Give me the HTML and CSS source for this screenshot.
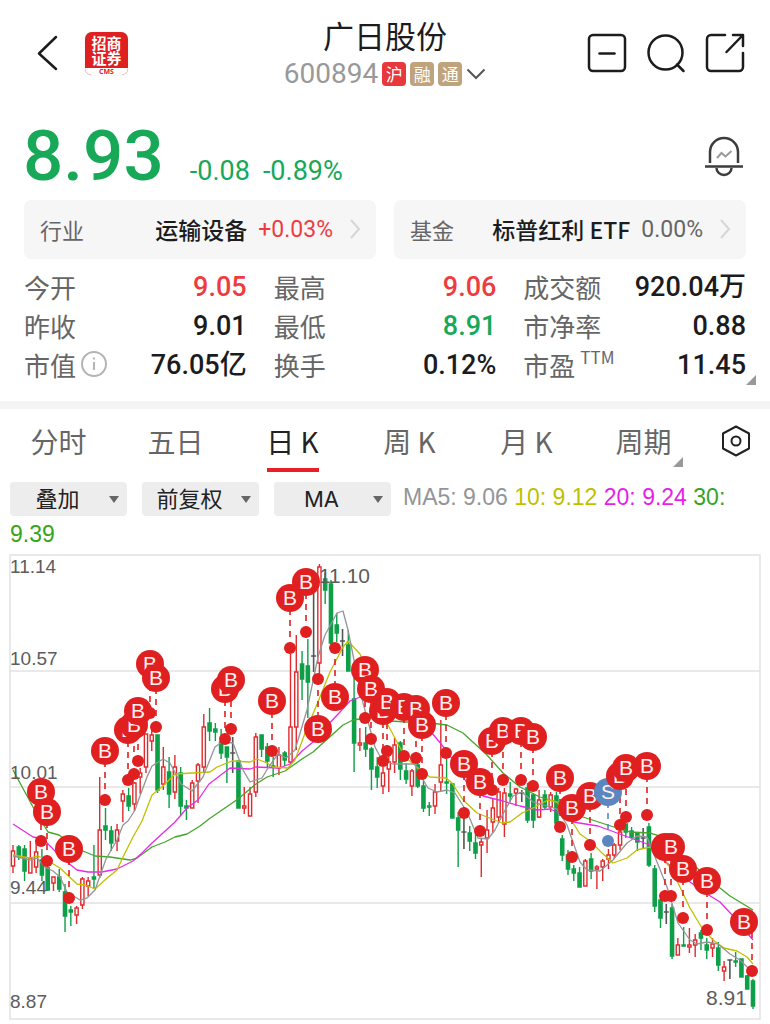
FILE: index.html
```html
<!DOCTYPE html>
<html lang="zh-CN">
<head>
<meta charset="utf-8">
<meta name="viewport" content="width=device-width, initial-scale=1">
<title>广日股份 600894</title>
<link rel="stylesheet" href="styles.css">
</head>
<body>
<header class="topbar">
  <div class="topbar-left">
    <button class="icon-btn" aria-label="返回"><svg width="24" height="38" viewBox="0 0 24 38"><path d="M20 3 3 19.500 20 35" class="ink"/></svg></button>
    <div class="logo"><div class="logo-name">招商<br>证券</div><div class="logo-code">CMS</div></div>
  </div>
  <div class="heading">
    <h1 class="stock-name">广日股份</h1>
    <button class="stock-code"><span class="code">600894</span><span class="tag tag-red">沪</span><span class="tag">融</span><span class="tag">通</span><svg width="20" height="12" viewBox="0 0 20 12"><path d="M1.500 1.500 10 10 18.500 1.500" class="chev-down"/></svg></button>
  </div>
  <div class="topbar-right">
    <button class="icon-btn" aria-label="移除自选"><svg width="40" height="40" viewBox="0 0 40 40"><rect x="2" y="2" width="36" height="36" rx="4" class="ink"/><path d="M12.500 20.500h15" class="ink"/></svg></button>
    <button class="icon-btn" aria-label="搜索"><svg width="40" height="40" viewBox="0 0 40 40"><circle cx="19.500" cy="19.500" r="17" class="ink"/><path d="m31 31.500 6.500 6.500" class="ink"/></svg></button>
    <button class="icon-btn" aria-label="分享"><svg width="40" height="40" viewBox="0 0 40 40"><path d="M20 2H6a4 4 0 0 0-4 4v28a4 4 0 0 0 4 4h28a4 4 0 0 0 4-4V20M38 13V2H28M37 3 21.500 19" class="ink"/></svg></button>
  </div>
</header>

<section class="quote">
  <div class="price">8.93</div>
  <div class="change"><span>-0.08</span><span>-0.89%</span></div>
  <button class="icon-btn bell" aria-label="股价提醒"><svg width="42" height="42" viewBox="0 0 42 42"><path d="M7 28V17a14 14 0 0 1 28 0v11M2 31.500h38M13.500 33a7.500 7 0 0 0 15 0" class="bell-line"/><path d="m14 23 4.500-5 4 3.500 6-5.500" class="bell-wave"/></svg></button>
</section>

<section class="links">
  <a class="link-card" href="#"><span class="link-label">行业</span><span class="link-name">运输设备</span><span class="link-pct up">+0.03%</span><svg width="12" height="20" viewBox="0 0 12 20"><path d="m2 1 8 9-8 9" class="chev"/></svg></a>
  <a class="link-card" href="#"><span class="link-label">基金</span><span class="link-name">标普红利 ETF</span><span class="link-pct">0.00%</span><svg width="12" height="20" viewBox="0 0 12 20"><path d="m2 1 8 9-8 9" class="chev"/></svg></a>
</section>

<dl class="stats">
  <div class="stat"><dt>今开</dt><dd class="up">9.05</dd></div>
  <div class="stat"><dt>最高</dt><dd class="up">9.06</dd></div>
  <div class="stat"><dt>成交额</dt><dd>920.04万</dd></div>
  <div class="stat"><dt>昨收</dt><dd>9.01</dd></div>
  <div class="stat"><dt>最低</dt><dd class="down">8.91</dd></div>
  <div class="stat"><dt>市净率</dt><dd>0.88</dd></div>
  <div class="stat"><dt>市值<svg width="26" height="26" viewBox="0 0 26 26"><circle cx="13" cy="13" r="12" class="info"/><path d="M13 11v8M13 6.500v2" class="info"/></svg></dt><dd>76.05亿</dd></div>
  <div class="stat"><dt>换手</dt><dd>0.12%</dd></div>
  <div class="stat"><dt>市盈<sup>TTM</sup></dt><dd>11.45</dd></div>
  <i class="corner stats-corner"></i>
</dl>

<nav class="tabs">
  <button class="tab">分时</button>
  <button class="tab">五日</button>
  <button class="tab active">日 K</button>
  <button class="tab">周 K</button>
  <button class="tab">月 K</button>
  <button class="tab">周期<i class="corner tab-corner"></i></button>
  <button class="tab-settings" aria-label="设置"><svg width="32" height="32" viewBox="0 0 32 32"><path d="M16 1.500 29 8.500v15L16 30.500 3 23.500v-15z" class="hex"/><circle cx="16" cy="16" r="4.500" class="hex"/></svg></button>
</nav>

<div class="indicators">
  <span class="pick"><select aria-label="叠加"><option>叠加</option></select></span><span class="pick"><select aria-label="复权"><option>前复权</option></select></span><span class="pick"><select aria-label="指标"><option>MA</option></select></span><span class="ma ma5">MA5: 9.06</span> <span class="ma ma10">10: 9.12</span> <span class="ma ma20">20: 9.24</span> <span class="ma30">30: 9.39</span>
</div>

<svg class="chart" id="chart" viewBox="0 554 770 470" role="img" aria-label="日K线图"></svg>
<script src="chart.js"></script>
</body>
</html>
```

FILE: styles.css
```css
* { box-sizing: border-box; }
body {
  margin: 0;
  background: #fff;
  color: #1c1c1e;
  font-family: "Noto Sans CJK SC", sans-serif;
  overflow-x: hidden;
}
button {
  border: 0;
  padding: 0;
  margin: 0;
  background: none;
  color: inherit;
  font: inherit;
  cursor: pointer;
}
svg { display: block; fill: none; }
.up { color: #ef3b40; }
.down { color: #17a858; }

.ink { stroke: #1c1c1e; stroke-width: 2.5; stroke-linecap: round; stroke-linejoin: round; }
.chev-down { stroke: #555; stroke-width: 2; }
.chev { stroke: #d6d6d6; stroke-width: 2; }
.bell-line { stroke: #3c3c3e; stroke-width: 2.5; }
.bell-wave { stroke: #999; stroke-width: 2; }
.info { stroke: #b4b4b4; stroke-width: 2; }
.hex { stroke: #222; stroke-width: 2; stroke-linejoin: round; }

.topbar {
  display: grid;
  grid-template-columns: 1fr auto 1fr;
  align-items: center;
  padding: 16px 25px 0 36px;
}
.topbar-left { display: flex; align-items: center; gap: 25px; }
.topbar-right { display: flex; justify-content: flex-end; gap: 19px; }
.logo {
  width: 43px;
  border-radius: 7px;
  overflow: hidden;
  background: #de2020;
  box-shadow: 0 0 1px #aaa;
  text-align: center;
  font-weight: 700;
}
.logo-name { padding: 3px 0 3px; color: #fff; font-size: 15px; line-height: 15px; }
.logo-code { background: #fff; color: #de2020; font-family: "Open Sans", sans-serif; font-size: 7px; line-height: 7px; }
.heading { display: flex; flex-direction: column; align-items: center; margin-left: -11px; }
.stock-name { margin: 0; font-size: 31px; line-height: 38px; font-weight: 400; }
.stock-code { display: flex; align-items: center; gap: 4px; padding-top: 4px; line-height: 32px; }
.code { color: #999; font: 400 28px/32px Roboto, sans-serif; }
.tag {
  width: 24px;
  border-radius: 4px;
  background: #bfa37c;
  color: #fff;
  font-size: 17px;
  line-height: 24px;
  text-align: center;
}
.tag-red { background: #e8373d; }

.quote { display: flex; align-items: flex-end; padding: 22px 25px 0 23px; }
.price { color: #17a858; font: 500 71px/88px Roboto, sans-serif; }
.change { display: flex; gap: 13px; margin-left: 26px; color: #17a858; font: 400 27px/32px Roboto, sans-serif; padding-bottom: 13px; }
.bell { margin: 0 0 23px auto; }

.links { display: grid; grid-template-columns: 1fr 1fr; gap: 18px; padding: 0 24px; }
.link-card {
  display: flex;
  align-items: center;
  height: 59px;
  padding: 0 15px 2px 16px;
  border-radius: 7px;
  background: #f6f6f6;
  color: #666;
  text-decoration: none;
}
.link-label { margin-right: auto; font-size: 22px; }
.link-name { color: #1c1c1e; font-size: 23px; font-weight: 500; }
.link-pct { margin: 2px 16px 0 11px; font: 400 23px/32px Roboto, sans-serif; }
.link-pct.up { color: #ef3b40; }

.stats {
  position: relative;
  display: grid;
  grid-template-columns: repeat(3, 1fr);
  column-gap: 27px;
  margin: 0;
  padding: 9px 24px 16px;
  border-bottom: 8px solid #f4f4f4;
}
.stat { display: flex; justify-content: space-between; align-items: center; line-height: 39px; }
.stat dt { display: flex; align-items: center; gap: 5px; height: 39px; padding-bottom: 3px; color: #666; font-size: 26px; }
.stat sup { align-self: flex-start; font-size: 17px; line-height: 22px; }
.stat dd { margin: 0; font-family: Roboto, "Noto Sans CJK SC", sans-serif; font-size: 27px; font-weight: 500; }
.corner { position: absolute; border-style: solid; border-width: 0 0 10px 10px; border-color: transparent transparent #999; }
.stats-corner { right: 14px; bottom: 16px; }

.tabs { display: flex; }
.tab {
  position: relative;
  flex: 1;
  height: 63px;
  color: #666;
  font-size: 28px;
}
.tab.active { color: #222; }
.tab.active::after {
  content: "";
  position: absolute;
  left: 50%;
  bottom: 0;
  width: 52px;
  height: 4px;
  margin-left: -26px;
  background: #ea1f25;
}
.tab-corner { right: 19px; bottom: 5px; }
.tab-settings { display: grid; place-items: center; width: 68px; }

.indicators { padding: 7px 10px 2px; font: 400 23px/36px "Liberation Sans", "Noto Sans CJK SC", sans-serif; }
.pick { position: relative; display: inline-block; width: 117px; margin-right: 15px; vertical-align: middle; }
.pick:nth-child(3) { margin-right: 12px; }
.pick select {
  appearance: none;
  display: block;
  width: 100%;
  height: 34px;
  padding: 0 22px 0 0;
  border: 0;
  border-radius: 4px;
  background: #ededed;
  color: #222;
  font: 400 22px/34px Inter, "Noto Sans CJK SC", sans-serif;
  text-align: center;
  text-align-last: center;
}
.pick::after {
  content: "";
  position: absolute;
  right: 8px;
  top: 14px;
  border: 5px solid transparent;
  border-top: 7px solid #666;
  border-bottom: 0;
}
.ma { white-space: nowrap; }
.ma5 { color: #939598; }
.ma10 { color: #c0bf00; }
.ma20 { color: #e81ee8; }
.ma30 { color: #35a41f; }

.chart { width: 100%; font-family: "Liberation Sans", sans-serif; }
.grid { stroke: #e2e2e2; stroke-width: 1.5; }
.candle-r { stroke: #e02b2e; stroke-width: 1.4; }
.candle-g { stroke: #0e9f48; fill: #0e9f48; stroke-width: 1.4; }
.candle-k { stroke: #555; stroke-width: 1.6; }
.line { stroke-width: 1.3; stroke-linejoin: round; }
.line-5 { stroke: #939598; }
.line-10 { stroke: #c0bf00; }
.line-20 { stroke: #e52be8; }
.line-30 { stroke: #43a629; }
.axis { fill: #5c5c5c; font-size: 19px; }
.peak { fill: #5c5c5c; font-size: 21px; }
.stem { stroke-width: 1.6; stroke-dasharray: 6 5; }
.buy { fill: #e02020; stroke: none; }
.sell { fill: #5b86c0; stroke: none; }
.stem-buy { stroke: #e02020; }
.stem-sell { stroke: #5b86c0; }
.letter { fill: #fff0f0; font-size: 21px; text-anchor: middle; }
```

FILE: chart.js
```js
const svg = document.getElementById('chart');
const NS = 'http://www.w3.org/2000/svg';

function add(name, cls, attrs, text) {
  const el = document.createElementNS(NS, name);
  el.setAttribute('class', cls);
  for (const key in attrs) el.setAttribute(key, attrs[key]);
  if (text) el.textContent = text;
  svg.appendChild(el);
}

// Each candle: colour, high, body top, body bottom, low.
const candles = `r845,851,866,873 g845,847,856,860 g845,849,871,881 r841,858,873,873 r841,852,867,873
g849,860,875,881 g862,868,890,891 r877,877,883,891 g869,877,889,892 g884,892,916,932
g906,910,912,926 r906,908,915,924 r877,879,905,909 r877,881,886,896 g845,877,879,888
r777,830,875,878 g808,826,830,840 g826,831,843,851 r824,830,841,851 r790,794,801,822
g788,796,806,811 r782,783,804,811 r768,773,777,794 r734,734,767,773 r725,735,741,751
g735,735,790,793 r747,767,784,790 g757,772,794,808 r755,767,792,799 g767,773,806,816
g800,806,808,820 r780,783,808,808 r763,765,781,803 r714,727,767,773 g708,723,731,741
g723,729,732,741 g729,742,753,759 g747,747,757,783 k737,753,753,773 g761,761,808,808
r787,806,808,814 r787,794,816,816 r733,737,792,797 g735,735,749,757 g743,747,761,768
g757,766,767,777 r747,755,768,775 g751,753,760,766 r654,727,762,763 r635,672,727,750
g651,664,679,700 g639,666,682,718 k593,656,656,672 r564,567,663,674 g573,579,590,604
g580,584,643,645 g613,625,633,642 k629,641,641,656 g630,645,671,671 g663,699,743,772
r728,743,745,751 g727,743,749,757 g747,749,769,790 g757,767,777,788 r767,773,786,794
r755,762,769,792 r738,745,762,773 g741,743,769,780 g763,771,779,784 r769,771,786,796
g760,765,786,788 g780,786,808,812 g802,806,807,816 r784,792,806,814 r720,765,782,791
g759,782,783,794 g783,784,818,818 g812,818,830,867 k813,832,832,849 g826,833,841,851
g833,843,853,859 r838,842,845,877 r810,830,838,853 r799,808,822,833 r788,792,817,823
r788,793,824,837 g782,794,796,802 r788,789,793,806 k790,793,793,802 g783,788,820,823
g793,795,820,828 r790,800,817,818 g790,795,807,810 r792,795,807,812 g792,796,823,826
g835,839,855,861 g850,855,869,875 g865,869,873,881 g867,873,887,887 r859,861,886,886
g853,859,871,879 r865,867,869,889 r859,861,867,881 r849,855,859,869 r843,845,855,859
r830,832,845,850 g824,824,832,838 g827,831,837,838 g833,833,842,851 k828,838,838,848
g823,827,865,867 g865,869,906,912 g898,900,918,928 k904,912,912,924 g904,908,956,959
r938,945,955,955 g927,945,946,946 r928,945,947,953 r934,940,945,957 g930,933,938,950
g938,945,950,959 r938,944,948,957 g942,948,965,971 r961,967,971,981 k960,960,960,979
g952,961,962,967 g959,959,977,977 g975,976,989,989 g979,981,1006,1009`.split(/\s+/);

const averages = {
  30: '13,770 33,807 48,832 59,835 83,851 95,856 110,857 130,860 137,858 152,847 165,842 175,837 187,834 200,826 209,819 238,799 256,784 267,777 285,771 302,759 313,752 323,743 343,725 353,720 373,717 390,721 407,722 430,723 447,725 463,733 487,755 503,773 520,787 540,797 557,802 583,817 620,829 630,832 650,833 657,835 697,868 720,888 730,896 753,910',
  20: '13,824 33,837 43,839 62,858 77,870 88,872 102,872 117,869 133,861 142,853 152,843 175,822 187,808 198,800 209,784 230,768 250,769 256,767 279,768 290,764 302,751 313,742 325,728 340,712 350,701 360,697 390,700 415,715 432,733 446,750 453,760 467,783 483,796 503,801 520,806 537,810 550,809 562,814 573,822 598,826 617,833 650,845 667,863 690,882 707,894 720,902 733,916 753,940',
  10: '13,855 30,858 37,856 43,858 60,868 77,884 85,885 95,889 106,879 117,870 123,857 133,837 142,821 152,795 163,786 175,774 210,772 217,767 232,761 250,762 257,759 267,763 273,767 288,768 295,760 307,728 318,702 330,672 343,647 348,641 360,654 375,685 388,725 405,757 417,767 430,777 446,778 452,783 463,800 477,813 487,817 502,823 510,822 522,813 535,807 548,800 557,802 573,823 580,834 590,841 602,853 613,863 627,858 637,850 650,847 670,867 678,883 690,908 702,928 713,940 724,948 737,951 747,957 753,964',
  5: '13,856 30,860 37,858 45,867 53,871 60,877 67,892 80,900 87,898 95,890 106,859 117,840 123,825 128,821 135,810 140,796 147,777 152,766 163,759 170,763 181,784 192,791 203,777 215,747 222,742 233,743 243,770 250,782 262,778 268,768 278,754 286,758 295,750 307,710 318,657 325,635 337,613 343,611 348,630 354,660 363,703 375,747 382,760 393,764 415,764 422,778 428,788 437,792 447,790 455,793 467,812 478,838 488,839 495,830 503,814 513,796 522,792 533,802 557,809 567,825 580,862 587,870 600,871 613,860 627,843 637,836 647,837 657,862 667,887 678,923 690,940 697,944 707,942 718,944 730,954 740,960 753,973'
};

// Trade marks: badge x, badge y, dot x, dot y.
const trades = [
  [41, 792, 41, 841], [47, 812, 47, 861], [69, 849, 69, 898], [105, 751, 105, 800],
  [128, 730, 128, 780], [134, 725, 134, 774], [138, 711, 138, 761], [150, 664, 150, 713],
  [156, 678, 156, 727], [225, 689, 225, 739], [231, 680, 231, 729], [272, 701, 272, 751],
  [290, 598, 290, 648], [306, 582, 306, 632], [318, 729, 318, 679], [335, 697, 335, 648],
  [365, 670, 365, 718], [371, 689, 371, 739], [383, 711, 383, 761], [387, 702, 387, 751],
  [404, 707, 404, 756], [416, 709, 416, 758], [422, 725, 422, 774], [446, 703, 446, 753],
  [464, 764, 464, 813], [480, 782, 480, 831], [492, 741, 492, 790], [503, 731, 503, 780],
  [521, 731, 521, 780], [533, 737, 533, 786], [560, 778, 560, 827], [572, 808, 572, 857],
  [590, 796, 590, 845], [608, 792, 608, 841, 'S'], [620, 776, 620, 825], [626, 768, 626, 817],
  [647, 766, 647, 815], [665, 847, 665, 896], [671, 847, 671, 896], [683, 869, 683, 918],
  [707, 881, 707, 930], [744, 922, 752, 971]
];

add('rect', 'grid', { x: 10, y: 555, width: 750, height: 464 });
[671, 787, 903].forEach(y => add('path', 'grid', { d: `M10 ${y}H760` }));

const step = 740 / (candles.length - 1);
candles.forEach((item, i) => {
  const kind = item[0];
  const [high, top, bottom, low] = item.slice(1).split(',').map(Number);
  const x = 13 + step * i;
  const d = kind === 'k'
    ? `M${x} ${high}V${low}M${x - 2.5} ${top}h5`
    : `M${x} ${high}V${top}M${x} ${bottom}V${low}M${x - 1.6} ${top}h3.2V${bottom}h-3.2z`;
  add('path', 'candle-' + kind, { d });
});

[30, 20, 10, 5].forEach(n => add('polyline', 'line line-' + n, { points: averages[n] }));

[['11.14', 573], ['10.57', 665], ['10.01', 779], ['9.44', 894], ['8.87', 1008]]
  .forEach(([label, y]) => add('text', 'axis', { x: 10, y }, label));
add('text', 'peak', { x: 319, y: 583 }, '11.10');
add('text', 'peak', { x: 706, y: 1005 }, '8.91');

trades.forEach(([, y, dx, dy, sell]) => {
  add('path', 'stem ' + (sell ? 'stem-sell' : 'stem-buy'), { d: `M${dx} ${dy}V${y}` });
  add('circle', sell ? 'sell' : 'buy', { cx: dx, cy: dy, r: 6 });
});
trades.forEach(([x, y, , , sell]) => {
  add('circle', sell ? 'sell' : 'buy', { cx: x, cy: y, r: 14 });
  add('text', 'letter', { x, y: y + 7 }, sell || 'B');
});
```
